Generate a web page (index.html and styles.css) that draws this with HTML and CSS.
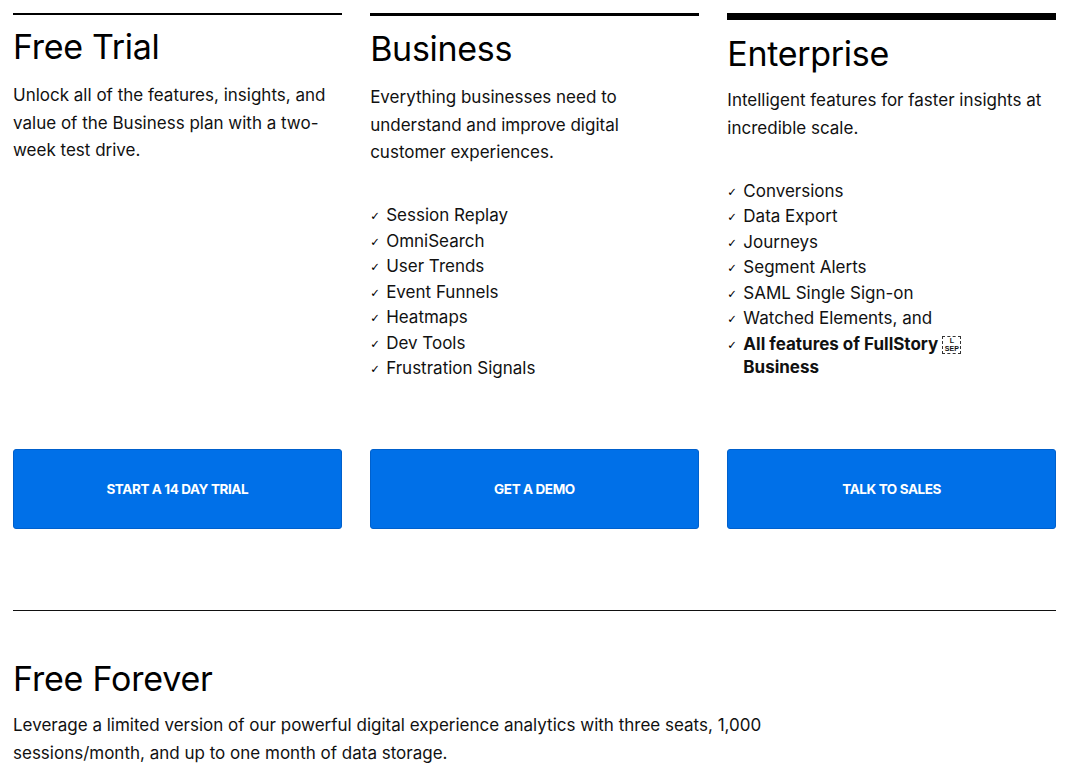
FILE: index.html
```html
<!DOCTYPE html>
<html lang="en">
<head>
<meta charset="utf-8">
<title>Plans</title>
<link rel="stylesheet" href="styles.css">
</head>
<body>
<main class="page">
  <section class="plans">
    <article class="plan plan-trial">
      <h2 class="plan-title">Free Trial</h2>
      <p class="plan-desc">Unlock all of the features, insights, and value of the Business plan with a two-week test drive.</p>
      <a class="plan-btn" href="#">START A 14 DAY TRIAL</a>
    </article>
    <article class="plan plan-business">
      <h2 class="plan-title">Business</h2>
      <p class="plan-desc">Everything businesses need to understand and improve digital customer experiences.</p>
      <ul class="features">
        <li>Session Replay</li>
        <li>OmniSearch</li>
        <li>User Trends</li>
        <li>Event Funnels</li>
        <li>Heatmaps</li>
        <li>Dev Tools</li>
        <li>Frustration Signals</li>
      </ul>
      <a class="plan-btn" href="#">GET A DEMO</a>
    </article>
    <article class="plan plan-enterprise">
      <h2 class="plan-title">Enterprise</h2>
      <p class="plan-desc">Intelligent features for faster insights at incredible scale.</p>
      <ul class="features">
        <li>Conversions</li>
        <li>Data Export</li>
        <li>Journeys</li>
        <li>Segment Alerts</li>
        <li>SAML Single Sign-on</li>
        <li>Watched Elements, and</li>
        <li class="strong">All features of FullStory <span class="sep-box"><span>L</span><span>SEP</span></span><br>Business</li>
      </ul>
      <a class="plan-btn" href="#">TALK TO SALES</a>
    </article>
  </section>
  <hr class="divider">
  <section class="forever">
    <h2 class="forever-title">Free Forever</h2>
    <p class="forever-desc">Leverage a limited version of our powerful digital experience analytics with three seats, 1,000 sessions/month, and up to one month of data storage.</p>
  </section>
</main>
</body>
</html>
```

FILE: styles.css
```css
* { box-sizing: border-box; }

html, body {
  margin: 0;
  padding: 0;
  background: #ffffff;
}

body {
  font-family: "Inter", "Liberation Sans", sans-serif;
  color: #111111;
}

.page {
  width: 1070px;
  padding: 13px 14px 0 13px;
}

.plans {
  display: grid;
  grid-template-columns: repeat(3, 1fr);
  column-gap: 28.5px;
}

.plan {
  display: flex;
  flex-direction: column;
  border-top: 2px solid #000;
}

.plan-business { border-top-width: 3px; }
.plan-enterprise { border-top-width: 7px; }

.plan-title {
  margin: 12px 0 0;
  font-size: 34px;
  font-weight: 400;
  line-height: 40px;
  letter-spacing: -0.3px;
  color: #000;
}

.plan-business .plan-title { margin-top: 13px; }
.plan-enterprise .plan-title { margin-top: 14px; }

.plan-desc {
  margin: 15px 0 0;
  font-size: 17px;
  line-height: 27.5px;
  color: #111;
}

.plan-enterprise .plan-desc { margin-top: 13px; }

.features {
  list-style: none;
  margin: 37.5px 0 69px;
  padding: 0;
  font-size: 17px;
  line-height: 23px;
}

.features li {
  position: relative;
  padding-left: 16px;
  margin-bottom: 2.5px;
}

.features li:last-child { margin-bottom: 0; }

.features li::before {
  content: "\2713";
  position: absolute;
  left: 0;
  top: 1px;
  font-size: 11.5px;
  font-weight: 700;
  font-family: "DejaVu Sans", sans-serif;
  color: #000;
}

.features li.strong { font-weight: 700; }

.sep-box {
  display: inline-flex;
  flex-direction: column;
  align-items: center;
  justify-content: center;
  vertical-align: top;
  margin-top: 3px;
  width: 19px;
  height: 18px;
  border: 1px dashed #333;
  font-size: 7px;
  line-height: 7.5px;
  font-weight: 700;
  font-family: "Liberation Sans", sans-serif;
}

.plan-btn {
  margin-top: auto;
  display: flex;
  align-items: center;
  justify-content: center;
  height: 80px;
  background: #0070e8;
  border: 1px solid #0060cc;
  border-radius: 3px;
  color: #fff;
  text-decoration: none;
  font-size: 13.5px;
  font-weight: 700;
  letter-spacing: -0.4px;
}

.divider {
  margin: 81px 0 0;
  border: 0;
  border-top: 1px solid #111;
  height: 0;
}

.forever-title {
  margin: 46px 0 0;
  font-size: 34px;
  font-weight: 400;
  line-height: 43px;
  letter-spacing: -0.2px;
  color: #000;
}

.forever-desc {
  margin: 10.5px 0 0;
  max-width: 790px;
  font-size: 17px;
  line-height: 28px;
}
```
